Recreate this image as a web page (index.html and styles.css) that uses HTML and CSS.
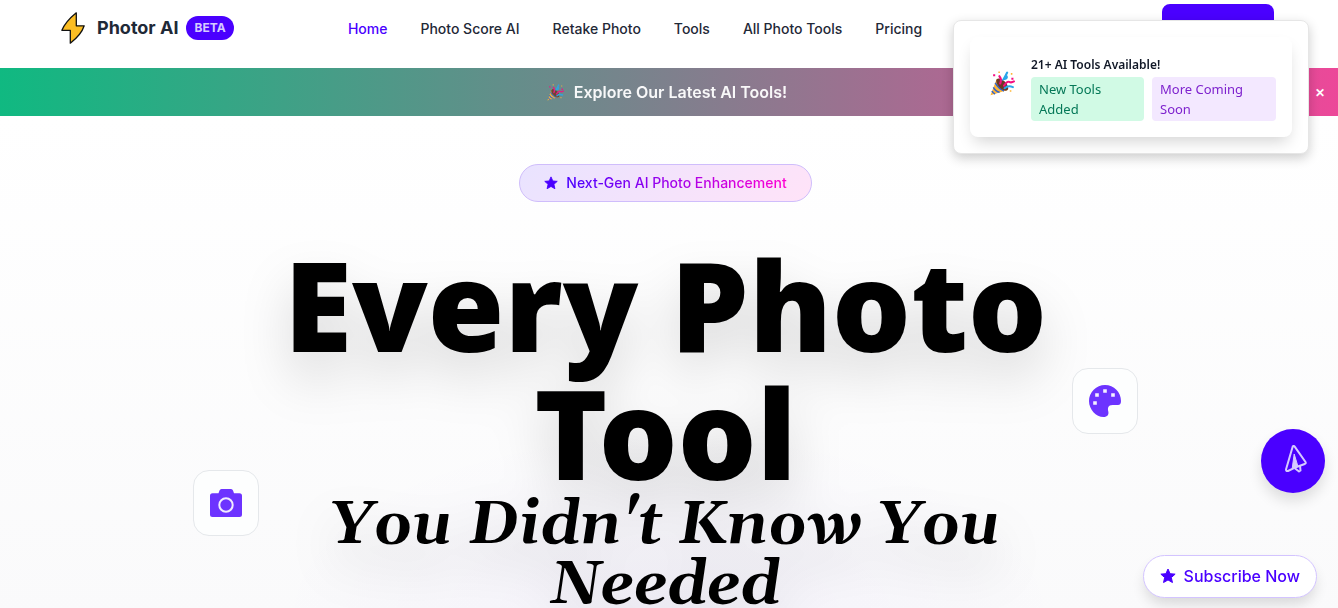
FILE: index.html
```html
<!DOCTYPE html>
<html lang="en">
<head>
<meta charset="utf-8">
<meta name="viewport" content="width=device-width, initial-scale=1">
<title>Photor AI</title>
<link rel="stylesheet" href="styles.css">
</head>
<body>
<svg class="sprite" aria-hidden="true">
  <symbol id="star" viewBox="0 0 24 24"><path fill="currentColor" stroke="currentColor" stroke-width="1.5" stroke-linejoin="round" d="M12 1.5l3.100 7 7.600.7-5.700 5.100 1.700 7.500L12 17.900 5.300 21.800 7 14.300 1.300 9.200l7.600-.7z"/></symbol>
  <symbol id="party" viewBox="0 0 24 24">
    <path fill="#ffb636" d="M6.500 7.500L.5 23.300 17 18.200z"/>
    <path stroke="#2f63cf" stroke-width="1.500" fill="none" d="M5 11.500q3.500 6 8.500 7.600M3.200 15.800q2.300 4 6 4.700M1.900 19.200q1 2.300 3 2.900"/>
    <ellipse cx="11.700" cy="13" rx="7.300" ry="3.800" transform="rotate(46 11.700 13)" fill="#6b3a25"/>
    <path fill="none" stroke="#f50f80" stroke-width="2" stroke-linecap="round" d="M9 5q2.500 3 .8 7M13.500 14q3-4.500 5-3.500t4.500-.5"/>
    <path fill="none" stroke="#2ba6ea" stroke-width="2" stroke-linecap="round" d="M16.500 1.500q-2 4-3.500 6.500 4-.5 3-3M14 16.500q3.500-3 8-1"/>
    <path fill="#f50f80" d="M3 3h2v2H3zM20.500 6.500h2v2h-2z"/>
    <path fill="#ffb636" d="M8 .5h1.500V2H8zM19 18.500h1.500V20H19zM20 2h1.500v1.500H20z"/>
  </symbol>
</svg>

<header class="header">
  <a class="brand" href="#">
    <svg class="brand-icon" viewBox="0 0 24 32" aria-hidden="true"><path fill="#fbbd23" stroke="#111" stroke-width="1.300" stroke-linejoin="round" d="M15.300.8C9.500 5.500 3.500 12 .9 18.300H9.300V31.200C15.500 26.500 21 20.500 23.200 13.800H15.300z"/></svg>
    <span class="brand-name">Photor AI</span>
    <span class="beta">BETA</span>
  </a>
  <nav class="nav">
    <a class="active" href="#">Home</a>
    <a href="#">Photo Score AI</a>
    <a href="#">Retake Photo</a>
    <a href="#">Tools</a>
    <a href="#">All Photo Tools</a>
    <a href="#">Pricing</a>
  </nav>
  <button class="cta" type="button" aria-label="Get started"></button>
</header>

<div class="banner">
  <a class="banner-link" href="#"><svg class="banner-icon" aria-hidden="true"><use href="#party"/></svg>Explore Our Latest AI Tools!</a>
  <button class="banner-close" type="button" aria-label="Close banner">✕</button>
</div>

<main class="hero">
  <div class="pill">
    <svg class="pill-icon" aria-hidden="true"><use href="#star"/></svg>
    <span class="pill-text">Next-Gen AI Photo Enhancement</span>
  </div>
  <h1 class="title">
    <span class="title-main">Every Photo Tool</span>
    <span class="title-sub">You Didn't Know You Needed</span>
  </h1>
  <div class="tile tile-camera">
    <svg viewBox="0 0 32 32" aria-hidden="true"><path fill="#6d33ff" d="M11.500 2h9.500q1.500 0 2 1.500l1 2.800h5.500A2.500 2.500 0 0 1 32 8.800v18.700a2.500 2.500 0 0 1-2.500 2.500h-27A2.500 2.500 0 0 1 0 27.500V8.800a2.500 2.500 0 0 1 2.500-2.500H8.500l1-2.800q.5-1.500 2-1.500z"/><circle cx="16" cy="18" r="6.700" fill="none" stroke="#f1ebff" stroke-width="2"/></svg>
  </div>
  <div class="tile tile-palette">
    <svg viewBox="0 0 32 32" aria-hidden="true"><path fill="#6d33ff" d="M16 0A16 16 0 0 0 0 16c0 8.500 7 16 14.500 16 4 0 5.500-2.500 4.800-5.500-.8-3.500-.3-6.500 4.200-6.500H29c2 0 3-1.500 3-4C32 7 25 0 16 0z"/><path fill="#f4f0ff" d="M14.200 4.200h3.600v3.600h-3.600zM6.200 8.200h3.600v3.600H6.200zM22.200 8.200h3.600v3.600h-3.600zM4.200 16.200h3.600v3.600H4.200z"/></svg>
  </div>
</main>

<aside class="toast">
  <div class="toast-card">
    <svg class="toast-icon" aria-hidden="true"><use href="#party"/></svg>
    <div class="toast-body">
      <strong class="toast-title">21+ AI Tools Available!</strong>
      <div class="tags">
        <span class="tag tag-green">New Tools Added</span>
        <span class="tag tag-purple">More Coming Soon</span>
      </div>
    </div>
  </div>
</aside>

<button class="fab" type="button" aria-label="Send feedback">
  <svg viewBox="0 0 24 28" fill="none" stroke="#d5caff" stroke-width="2" stroke-linejoin="round" aria-hidden="true"><path d="M8.800 1.300Q9.800.5 10.700 1.700L21.500 17q.8 1.500-.8 2L10.500 22.800 4 26q-2 .5-2-1.500z"/><path fill="#d5caff" stroke-width="1" d="M10.200 9L8.200 23.500 12 22l1.800-1z"/><path d="M10.500 23l4.500 3.500 1.500-1-.5-5"/></svg>
</button>
<button class="subscribe" type="button">
  <svg class="subscribe-icon" aria-hidden="true"><use href="#star"/></svg>Subscribe Now
</button>
</body>
</html>
```
FILE: styles.css
```css
* { box-sizing: border-box; }

body {
  margin: 0;
  min-height: 100vh;
  overflow: hidden;
  background: #fff;
  color: #1f2937;
  font-family: Inter, "Liberation Sans", sans-serif;
}

a { color: inherit; text-decoration: none; }
button { margin: 0; padding: 0; border: 0; font: inherit; cursor: pointer; }
.sprite { position: absolute; width: 0; height: 0; }

.header {
  display: grid;
  grid-template-columns: 9fr auto 11fr;
  align-items: center;
  padding: 4px 64px 16px 60px;
  background: #fff;
}
.brand { display: flex; align-items: center; gap: 8px; }
.brand-icon { width: 26px; height: 32px; margin-right: 3px; }
.brand-name { font-size: 18px; font-weight: 700; line-height: 28px; }
.beta {
  padding: 0 8px;
  border-radius: 12px;
  background: #4a00ff;
  color: #d5caff;
  font-size: 12px;
  font-weight: 700;
  line-height: 24px;
}
.nav { display: flex; gap: 33px; padding-top: 2px; font-size: 14px; font-weight: 500; line-height: 20px; white-space: nowrap; }
.nav .active { color: #4a00ff; }
.cta { justify-self: end; width: 112px; height: 48px; border-radius: 8px; background: #4a00ff; }

.banner {
  display: flex;
  align-items: center;
  padding: 0 13px;
  background: linear-gradient(90deg, #10b981, #ec4899);
  color: #fff;
  line-height: 48px;
}
.banner-link {
  display: flex;
  flex: 1;
  align-items: center;
  justify-content: center;
  gap: 10px;
  padding-left: 6px;
  font-weight: 600;
  opacity: .95;
}
.banner-icon { width: 17px; height: 17px; opacity: .9; }
.banner-close { padding-top: 2px; background: none; color: #fff; font-size: 12px; font-weight: 700; line-height: 20px; }

.hero {
  position: relative;
  display: flex;
  flex-direction: column;
  align-items: center;
  min-height: 492px;
  padding: 48px 7px 0 0;
  background:
    radial-gradient(ellipse 400px 190px at 50% 100%, rgba(74, 0, 255, .03), transparent),
    linear-gradient(#fff, #fafafb);
}
.pill {
  display: flex;
  align-items: center;
  gap: 8px;
  padding: 8px 24px;
  border: 1px solid #cfbdfb;
  border-radius: 20px;
  background: linear-gradient(135deg, #e9e3ff, #ffe3f8);
  font-size: 14px;
  font-weight: 500;
  line-height: 20px;
}
.pill-icon { width: 14px; height: 14px; color: #4a00ff; }
.pill-text {
  background: linear-gradient(90deg, #4a00ff, #ff00d3);
  background-clip: text;
  -webkit-background-clip: text;
  color: transparent;
}
.title {
  max-width: 896px;
  margin: 38px 0 0;
  color: #000;
  text-align: center;
  filter: drop-shadow(0 25px 25px rgba(0, 0, 0, .15));
}
.title-main { display: block; font: 900 124px/128px "Noto Sans", sans-serif; }
.title-sub { display: block; max-width: 768px; margin: 0 auto; font: italic 700 60px/60px Gelasio, Georgia, "DejaVu Serif", serif; }

.tile {
  position: absolute;
  display: grid;
  place-items: center;
  width: 66px;
  height: 66px;
  border: 1px solid #e5e8eb;
  border-radius: 16px;
  background: #fdfefe;
}
.tile svg { width: 32px; height: 32px; }
.tile-camera { top: 354px; left: 193px; }
.tile-palette { top: 252px; right: 200px; }

.toast {
  position: fixed;
  top: 20px;
  right: 29px;
  width: 356px;
  padding: 16px;
  border: 1px solid #e6e6e6;
  border-radius: 8px;
  background: #fff;
  box-shadow: 0 4px 12px rgba(0, 0, 0, .2);
  font-family: "Noto Sans", sans-serif;
}
.toast-card {
  display: flex;
  align-items: center;
  gap: 16px;
  padding: 16px 16px 16px 20px;
  border-radius: 8px;
  background: #fff;
  box-shadow: 0 8px 16px -4px rgba(0, 0, 0, .18);
}
.toast-icon { flex: none; width: 25px; height: 25px; margin-bottom: 8px; }
.toast-body { flex: 1; }
.toast-title { display: block; padding-top: 2px; margin-bottom: 2px; color: #111827; font-size: 12px; font-weight: 600; line-height: 20px; }
.tags { display: grid; grid-template-columns: 113fr 124fr; gap: 8px; font-size: 13px; line-height: 20px; }
.tag { padding: 2px 8px; border-radius: 4px; }
.tag-green { background: #d1fae5; color: #047857; }
.tag-purple { background: #f3e8ff; color: #7e22ce; }

.fab {
  position: fixed;
  right: 13px;
  bottom: 115px;
  display: grid;
  place-items: center;
  width: 64px;
  height: 64px;
  padding: 0 0 4px 5px;
  border-radius: 50%;
  background: #4a00ff;
  box-shadow: 0 8px 14px rgba(0, 0, 0, .12);
}
.fab svg { width: 24px; height: 28px; }
.subscribe {
  position: fixed;
  right: 21px;
  bottom: 10px;
  display: flex;
  align-items: center;
  gap: 8px;
  padding: 8px 16px 9px;
  border: 1px solid #d3c4ff;
  border-radius: 24px;
  background: #fff;
  box-shadow: 0 8px 14px -2px rgba(0, 0, 0, .14);
  color: #4a00ff;
  font-weight: 500;
  line-height: 24px;
}
.subscribe-icon { width: 16px; height: 16px; }
```
